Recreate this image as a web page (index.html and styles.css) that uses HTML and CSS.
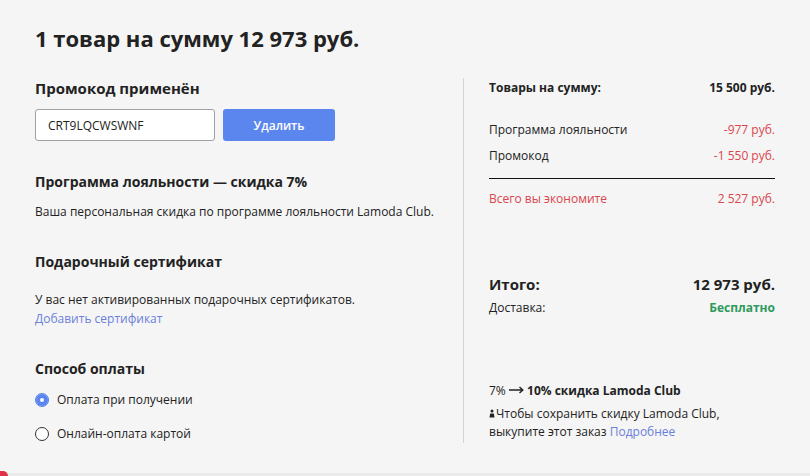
FILE: index.html
```
<!DOCTYPE html>
<html lang="ru">
<head>
  <meta charset="UTF-8">
  <meta name="viewport" content="width=device-width, initial-scale=1.0">
  <title>Оформление заказа</title>
  <link rel="stylesheet" href="styles.css">
</head>
<body>
  <div class="page">
    <h1>1 товар на сумму 12 973 руб.</h1>

    <div class="main">
      <div class="left">
        <h2 class="promo-title">Промокод применён</h2>
        <div class="promo-row">
          <input class="promo-input" type="text" value="CRT9LQCWSWNF" readonly>
          <button class="promo-btn">Удалить</button>
        </div>

        <h2 class="loyal-title">Программа лояльности — скидка 7%</h2>
        <p class="note loyal-note">Ваша персональная скидка по программе лояльности Lamoda Club.</p>

        <h2 class="gift-title">Подарочный сертификат</h2>
        <p class="note gift-note">У вас нет активированных подарочных сертификатов.<br>
          <a class="link" href="#">Добавить сертификат</a></p>

        <h2 class="pay-title">Способ оплаты</h2>
        <div class="radio checked"><span class="dot"></span>Оплата при получении</div>
        <div class="radio"><span class="dot"></span>Онлайн-оплата картой</div>
      </div>

      <div class="right">
        <div class="row bold">
          <span>Товары на сумму:</span><span>15 500 руб.</span>
        </div>
        <div class="row first-minus">
          <span>Программа лояльности</span><span class="red">-977 руб.</span>
        </div>
        <div class="row">
          <span>Промокод</span><span class="red">-1 550 руб.</span>
        </div>
        <div class="sep"></div>
        <div class="row red saved">
          <span>Всего вы экономите</span><span>2 527 руб.</span>
        </div>

        <div class="row total">
          <span>Итого:</span><span>12 973 руб.</span>
        </div>
        <div class="row delivery">
          <span>Доставка:</span><span class="free">Бесплатно</span>
        </div>

        <div class="club">
          <div class="club-title">7% <svg class="arrow" width="15" height="8" viewBox="0 0 15 8"><path d="M0 4H13.5M10.5 1L13.8 4L10.5 7" fill="none" stroke="#222" stroke-width="1.4"/></svg> <b>10% скидка Lamoda Club</b></div>
          <p class="club-text"><svg class="lock" width="6" height="9" viewBox="0 0 6 9"><circle cx="3" cy="2" r="1.5" fill="#222"/><path d="M1.2 4.5h3.6L5.5 8.5H0.5z" fill="#222"/></svg>Чтобы сохранить скидку Lamoda Club,<br>выкупите этот заказ <a class="link" href="#">Подробнее</a></p>
        </div>
      </div>
    </div>
  </div>
  <div class="footer"><span class="corner"></span></div>
</body>
</html>
```

FILE: styles.css
```
body {
  margin: 0;
  background: #f5f5f5;
  font-family: "Open Sans", sans-serif;
  color: #222;
}
.page {
  height: 473px;
  padding: 23px 35px 0 35px;
  box-sizing: border-box;
}
h1 {
  margin: 0;
  font-size: 22px;
  line-height: 30px;
  font-weight: 700;
}
h2 {
  margin: 0;
  font-size: 14px;
  line-height: 20px;
  font-weight: 700;
}
.main {
  display: flex;
  margin-top: 25px;
}
.left {
  width: 428px;
}
.right {
  flex: 1;
  border-left: 1px solid #d4d4d4;
  padding-left: 25px;
  font-size: 12px;
  line-height: 18px;
  padding-top: 1px;
}
.promo-title {
  font-size: 15px;
}
.promo-row {
  display: flex;
  gap: 8px;
  margin-top: 11px;
}
.promo-input {
  width: 180px;
  height: 32px;
  box-sizing: border-box;
  border: 1px solid #a0a0a0;
  border-radius: 3px;
  background: #fff;
  padding: 0 12px;
  font-family: inherit;
  font-size: 12px;
  color: #222;
}
.promo-btn {
  width: 112px;
  height: 32px;
  border: 0;
  border-radius: 3px;
  background: #5b86ee;
  color: #fff;
  font-family: inherit;
  font-size: 12px;
  font-weight: 600;
}
.loyal-title {
  margin-top: 31px;
}
.note {
  margin: 0;
  font-size: 12px;
  line-height: 18px;
}
.loyal-note {
  margin-top: 11px;
}
.gift-title {
  margin-top: 31px;
}
.gift-note {
  margin-top: 18px;
  line-height: 19px;
}
.link {
  color: #6b7fdb;
  text-decoration: none;
}
.pay-title {
  margin-top: 31px;
}
.radio {
  display: flex;
  align-items: center;
  gap: 8px;
  font-size: 12px;
  line-height: 18px;
  margin-top: 12px;
}
.radio + .radio {
  margin-top: 16px;
}
.dot {
  width: 12px;
  height: 12px;
  border: 1px solid #333;
  border-radius: 50%;
  background: #fff;
  box-sizing: content-box;
}
.checked .dot {
  border-color: #5b86ee;
  background: #5b86ee;
  box-shadow: inset 0 0 0 4px #5b86ee, inset 0 0 0 6px #fff;
}
.row {
  display: flex;
  justify-content: space-between;
}
.bold {
  font-weight: 700;
}
.row + .row {
  margin-top: 8px;
}
.row.first-minus {
  margin-top: 24px;
}
.red {
  color: #d9464c;
}
.sep {
  height: 1px;
  background: #111;
  margin-top: 13px;
}
.row.saved {
  margin-top: 11px;
}
.row.total {
  margin-top: 66px;
  font-size: 15px;
  line-height: 20px;
  font-weight: 700;
}
.row.delivery {
  margin-top: 5px;
}
.free {
  color: #2e9a5c;
  font-weight: 700;
}
.club {
  margin-top: 65px;
}
.arrow {
  vertical-align: 1px;
}
.club-text {
  margin: 5px 0 0 0;
}
.lock {
  margin-right: 1px;
}
.footer {
  height: 3px;
  background: #ebebeb;
  position: relative;
}
.corner {
  position: absolute;
  left: 0;
  top: -2px;
  width: 8px;
  height: 5px;
  background: #e0334a;
  border-top-right-radius: 6px;
}
```
